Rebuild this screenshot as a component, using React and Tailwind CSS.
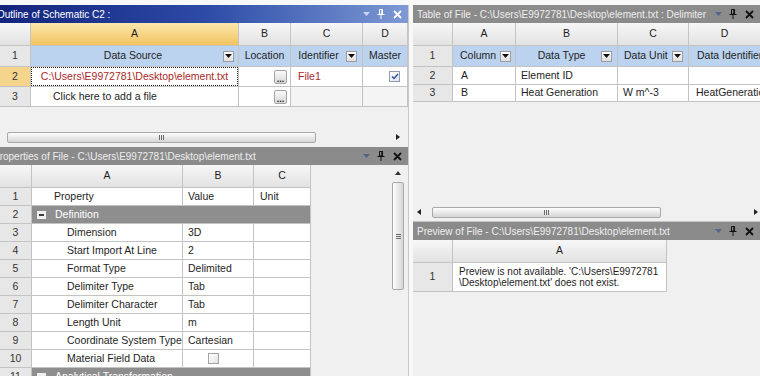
import React from 'react'

function DropTri() {
  return (
    <svg width="7" height="4" viewBox="0 0 7 4">
      <path d="M0 0h7L3.5 4z" fill="currentColor" />
    </svg>
  )
}

function Pin() {
  return (
    <svg width="8" height="10" viewBox="0 0 8 10">
      <path d="M2.5 0.5h3v4.5h-3z" fill="none" stroke="currentColor" />
      <path d="M5 0.5v4.5" stroke="currentColor" strokeWidth="1.4" />
      <path d="M0.5 5.5h7" stroke="currentColor" />
      <path d="M4 5.5v4.5" stroke="currentColor" />
    </svg>
  )
}

function Close() {
  return (
    <svg width="9" height="9" viewBox="0 0 9 9">
      <path d="M1 1l7 7M8 1L1 8" stroke="currentColor" strokeWidth="1.8" />
    </svg>
  )
}

function TitleBar({ title, active, textClass }) {
  return (
    <div
      className={`flex h-[18px] shrink-0 items-center overflow-hidden whitespace-nowrap ${
        active
          ? 'bg-linear-to-r from-[#13237d] via-[#2d4aa6] to-[#7e99d4] text-white'
          : 'bg-[#8b8b8b] text-[#eeeeee]'
      }`}
    >
      <span className={`min-w-0 flex-1 overflow-hidden text-[10px] ${textClass}`}>
        {title}
      </span>
      <div className={`flex items-center pr-[6px] ${active ? 'text-white' : 'text-[#111111]'}`}>
        <span className={active ? 'text-[#c9d5f2]' : 'text-[#55648a]'}>
          <DropTri />
        </span>
        <span className="ml-[7px]">
          <Pin />
        </span>
        <span className="ml-[8px]">
          <Close />
        </span>
      </div>
    </div>
  )
}

function Cell({ w, className = '', children }) {
  return (
    <div
      className={`flex h-full shrink-0 items-center overflow-hidden whitespace-nowrap border-r border-[#c3c3c3] ${w} ${className}`}
    >
      {children}
    </div>
  )
}

function Row({ h, children }) {
  return <div className={`flex shrink-0 border-b border-[#c3c3c3] ${h}`}>{children}</div>
}

const letterCell = 'justify-center bg-linear-to-b from-[#f7f7f7] to-[#e2e2e2]'
const numCell = 'justify-center bg-[#e7e7e7] text-[#333333]'
const blueCell = 'bg-[#bcd3ef]'

function DropBox() {
  return (
    <span className="flex h-[11px] w-[11px] shrink-0 items-center justify-center border border-[#9c9c9c] bg-linear-to-b from-[#ffffff] to-[#dedede] text-[#111111]">
      <DropTri />
    </span>
  )
}

function DotsButton() {
  return (
    <span className="ml-auto mr-[3px] flex h-[14px] w-[13px] items-end justify-center rounded-[2px] border border-[#a3a3a3] bg-linear-to-b from-[#fbfbfb] to-[#d8d8d8] pb-[1px] text-[9px] font-bold leading-[6px] text-[#222222]">
      ...
    </span>
  )
}

function CheckBox({ checked }) {
  return (
    <span className="flex h-[11px] w-[11px] items-center justify-center border border-[#8e9aae] bg-linear-to-br from-[#ffffff] to-[#dfe3ea]">
      {checked && (
        <svg width="8" height="7" viewBox="0 0 8 7">
          <path d="M1 3.5l2 2L7 1" fill="none" stroke="#2c4aa0" strokeWidth="1.4" />
        </svg>
      )}
    </span>
  )
}

function HScroll({ leftArrow, thumbClass, rightClass }) {
  return (
    <div className="flex h-[12px] shrink-0 items-center bg-[#f0f0f0]">
      {leftArrow && (
        <svg width="4" height="6" viewBox="0 0 4 6" className="ml-[4px]">
          <path d="M4 0v6L0 3z" fill="#222222" />
        </svg>
      )}
      <div
        className={`flex h-[11px] items-center justify-center gap-[1px] rounded-[2px] border border-[#a9a9a9] bg-linear-to-b from-[#fdfdfd] to-[#d6d6d6] ${thumbClass}`}
      >
        <span className="h-[5px] w-px bg-[#6b6b6b]" />
        <span className="h-[5px] w-px bg-[#6b6b6b]" />
        <span className="h-[5px] w-px bg-[#6b6b6b]" />
      </div>
      <svg width="4" height="6" viewBox="0 0 4 6" className={`ml-auto ${rightClass}`}>
        <path d="M0 0v6l4-3z" fill="#222222" />
      </svg>
    </div>
  )
}

function OutlinePanel() {
  const c = ['w-[31px]', 'w-[208px]', 'w-[52px]', 'w-[72px]', 'w-[45px]']
  return (
    <div className="flex h-[142px] shrink-0 flex-col">
      <TitleBar title="Outline of Schematic C2 :" active textClass="-ml-[3px]" />
      <div className="flex flex-col">
        <Row h="h-[23px]">
          <Cell w={c[0]} className={letterCell} />
          <Cell w={c[1]} className="justify-center bg-linear-to-b from-[#fce7ab] to-[#f2c35f]">A</Cell>
          <Cell w={c[2]} className={letterCell}>B</Cell>
          <Cell w={c[3]} className={letterCell}>C</Cell>
          <Cell w={c[4]} className={letterCell}>D</Cell>
        </Row>
        <Row h="h-[21px]">
          <Cell w={c[0]} className={numCell}>1</Cell>
          <Cell w={c[1]} className={blueCell}>
            <span className="flex-1 pl-[12px] text-center">Data Source</span>
            <span className="mr-[4px]"><DropBox /></span>
          </Cell>
          <Cell w={c[2]} className={`${blueCell} justify-center`}>Location</Cell>
          <Cell w={c[3]} className={blueCell}>
            <span className="flex-1 text-center">Identifier</span>
            <span className="mr-[5px]"><DropBox /></span>
          </Cell>
          <Cell w={c[4]} className={`${blueCell} justify-center`}>Master</Cell>
        </Row>
        <Row h="h-[20px]">
          <Cell w={c[0]} className="justify-center bg-[#f5d58b] text-[#333333]">2</Cell>
          <Cell w={c[1]} className="bg-white">
            <div className="flex h-full w-full items-center justify-center border border-dotted border-[#222222] text-[#a82828]">
              C:\Users\E9972781\Desktop\element.txt
            </div>
          </Cell>
          <Cell w={c[2]} className="bg-white"><DotsButton /></Cell>
          <Cell w={c[3]} className="bg-white pl-[7px] text-[#a82828]">File1</Cell>
          <Cell w={c[4]} className="justify-end bg-white pr-[7px]"><CheckBox checked /></Cell>
        </Row>
        <Row h="h-[20px]">
          <Cell w={c[0]} className={numCell}>3</Cell>
          <Cell w={c[1]} className="bg-white pl-[22px]">Click here to add a file</Cell>
          <Cell w={c[2]} className="bg-white"><DotsButton /></Cell>
          <Cell w={c[3]} className="bg-[#f4f4f4]" />
          <Cell w={c[4]} className="bg-[#f4f4f4]" />
        </Row>
      </div>
      <div className="h-[24px] shrink-0" />
      <HScroll thumbClass="ml-[7px] w-[309px]" rightClass="mr-[8px]" />
      <div className="h-[5px] shrink-0 border-b border-[#c4c4c4]" />
    </div>
  )
}

const props = [
  ['3', 'Dimension', '3D'],
  ['4', 'Start Import At Line', '2'],
  ['5', 'Format Type', 'Delimited'],
  ['6', 'Delimiter Type', 'Tab'],
  ['7', 'Delimiter Character', 'Tab'],
  ['8', 'Length Unit', 'm'],
  ['9', 'Coordinate System Type', 'Cartesian'],
  ['10', 'Material Field Data', null],
]

function GroupRow({ num, label }) {
  return (
    <Row h="h-[18px]">
      <Cell w="w-[32px]" className={numCell}>{num}</Cell>
      <div className="flex h-full w-[279px] shrink-0 items-center border-r border-[#c3c3c3] bg-[#8e8e8e] text-white">
        <span className="ml-[5px] flex h-[8px] w-[9px] items-center justify-center bg-[#efefef]">
          <span className="h-[2px] w-[5px] bg-[#3a3a3a]" />
        </span>
        <span className="ml-[9px]">{label}</span>
      </div>
    </Row>
  )
}

function PropertiesPanel() {
  const c = ['w-[32px]', 'w-[151px]', 'w-[71px]', 'w-[57px]']
  return (
    <div className="flex min-h-0 flex-1 flex-col">
      <TitleBar title="Properties of File - C:\Users\E9972781\Desktop\element.txt" textClass="-ml-[7px]" />
      <div className="flex min-h-0 flex-1">
        <div className="flex w-[311px] shrink-0 flex-col">
          <Row h="h-[23px]">
            <Cell w={c[0]} className={letterCell} />
            <Cell w={c[1]} className={letterCell}>A</Cell>
            <Cell w={c[2]} className={letterCell}>B</Cell>
            <Cell w={c[3]} className={letterCell}>C</Cell>
          </Row>
          <Row h="h-[18px]">
            <Cell w={c[0]} className={numCell}>1</Cell>
            <Cell w={c[1]} className="bg-white pl-[22px]">Property</Cell>
            <Cell w={c[2]} className="bg-white pl-[5px]">Value</Cell>
            <Cell w={c[3]} className="bg-white pl-[6px]">Unit</Cell>
          </Row>
          <GroupRow num="2" label="Definition" />
          {props.map(([n, p, v]) => (
            <Row key={n} h="h-[18px]">
              <Cell w={c[0]} className={numCell}>{n}</Cell>
              <Cell w={c[1]} className="bg-white pl-[35px]">{p}</Cell>
              <Cell w={c[2]} className={`bg-white ${v === null ? 'justify-center pr-[10px]' : 'pl-[5px]'}`}>
                {v === null ? (
                  <span className="h-[11px] w-[11px] border border-[#a4a4a4] bg-linear-to-br from-[#ffffff] to-[#e2e2e2]" />
                ) : (
                  v
                )}
              </Cell>
              <Cell w={c[3]} className="bg-white" />
            </Row>
          ))}
          <GroupRow num="11" label="Analytical Transformation" />
        </div>
        <div className="ml-auto mr-[4px] flex w-[12px] shrink-0 flex-col items-center">
          <svg width="6" height="4" viewBox="0 0 6 4" className="mt-[6px]">
            <path d="M0 4h6L3 0z" fill="#333333" />
          </svg>
          <div className="mt-[7px] flex h-[108px] w-[12px] flex-col items-center justify-center gap-[1px] rounded-[2px] border border-[#a9a9a9] bg-linear-to-r from-[#fdfdfd] to-[#d6d6d6]">
            <span className="h-px w-[5px] bg-[#6b6b6b]" />
            <span className="h-px w-[5px] bg-[#6b6b6b]" />
            <span className="h-px w-[5px] bg-[#6b6b6b]" />
          </div>
        </div>
      </div>
    </div>
  )
}

function TablePanel() {
  const c = ['w-[40px]', 'w-[63px]', 'w-[102px]', 'w-[71px]', 'w-[90px]']
  return (
    <div className="flex h-[217px] shrink-0 flex-col">
      <TitleBar title="Table of File - C:\Users\E9972781\Desktop\element.txt : Delimiter" textClass="pl-[4px]" />
      <div className="flex flex-col overflow-hidden">
        <Row h="h-[23px]">
          <Cell w={c[0]} className={letterCell} />
          <Cell w={c[1]} className={letterCell}>A</Cell>
          <Cell w={c[2]} className={letterCell}>B</Cell>
          <Cell w={c[3]} className={letterCell}>C</Cell>
          <Cell w={c[4]} className={letterCell}><span className="pr-[18px]">D</span></Cell>
        </Row>
        <Row h="h-[21px]">
          <Cell w={c[0]} className={numCell}>1</Cell>
          <Cell w={c[1]} className={blueCell}>
            <span className="flex-1 pl-[7px]">Column</span>
            <span className="mr-[4px]"><DropBox /></span>
          </Cell>
          <Cell w={c[2]} className={blueCell}>
            <span className="flex-1 pl-[6px] text-center">Data Type</span>
            <span className="mr-[5px]"><DropBox /></span>
          </Cell>
          <Cell w={c[3]} className={blueCell}>
            <span className="flex-1 pl-[6px]">Data Unit</span>
            <span className="mr-[5px]"><DropBox /></span>
          </Cell>
          <Cell w={c[4]} className={`${blueCell} pl-[8px]`}>Data Identifier</Cell>
        </Row>
        <Row h="h-[18px]">
          <Cell w={c[0]} className={numCell}>2</Cell>
          <Cell w={c[1]} className="bg-white pl-[8px]">A</Cell>
          <Cell w={c[2]} className="bg-white pl-[5px]">Element ID</Cell>
          <Cell w={c[3]} className="bg-white" />
          <Cell w={c[4]} className="bg-white" />
        </Row>
        <Row h="h-[17px]">
          <Cell w={c[0]} className={numCell}>3</Cell>
          <Cell w={c[1]} className="bg-white pl-[8px]">B</Cell>
          <Cell w={c[2]} className="bg-white pl-[5px]">Heat Generation</Cell>
          <Cell w={c[3]} className="bg-white pl-[5px]">W m^-3</Cell>
          <Cell w={c[4]} className="bg-white pl-[7px]">HeatGeneration</Cell>
        </Row>
      </div>
      <div className="min-h-0 flex-1" />
      <HScroll leftArrow thumbClass="ml-[11px] w-[229px]" rightClass="mr-[2px]" />
      <div className="h-[4px] shrink-0 border-b border-[#c4c4c4]" />
    </div>
  )
}

function PreviewPanel() {
  return (
    <div className="flex min-h-0 flex-1 flex-col">
      <TitleBar title="Preview of File - C:\Users\E9972781\Desktop\element.txt" textClass="pl-[4px]" />
      <div className="flex w-[254px] flex-col">
        <Row h="h-[23px]">
          <Cell w="w-[40px]" className={letterCell} />
          <Cell w="w-[214px]" className={letterCell}>A</Cell>
        </Row>
        <Row h="h-[29px]">
          <Cell w="w-[40px]" className={numCell}>1</Cell>
          <Cell w="w-[214px]" className="bg-white pl-[6px] text-[10px] leading-[11px]">
            <span>
              Preview is not available. 'C:\Users\E9972781
              <br />
              \Desktop\element.txt' does not exist.
            </span>
          </Cell>
        </Row>
      </div>
    </div>
  )
}

export default function App() {
  return (
    <div className="h-[376px] w-[760px] overflow-hidden bg-[#f0f0f0] font-['Liberation_Sans',Arial,sans-serif] text-[10.5px] text-[#1e1e1e]">
      <div className="h-[5px] bg-[#f8f8f8]" />
      <div className="flex h-[371px]">
        <div className="flex w-[408px] shrink-0 flex-col overflow-hidden">
          <OutlinePanel />
          <PropertiesPanel />
        </div>
        <div className="w-[5px] shrink-0 border-l border-[#c8c8c8] bg-[#f8f8f8]" />
        <div className="flex min-w-0 flex-1 flex-col overflow-hidden">
          <TablePanel />
          <PreviewPanel />
        </div>
      </div>
    </div>
  )
}
